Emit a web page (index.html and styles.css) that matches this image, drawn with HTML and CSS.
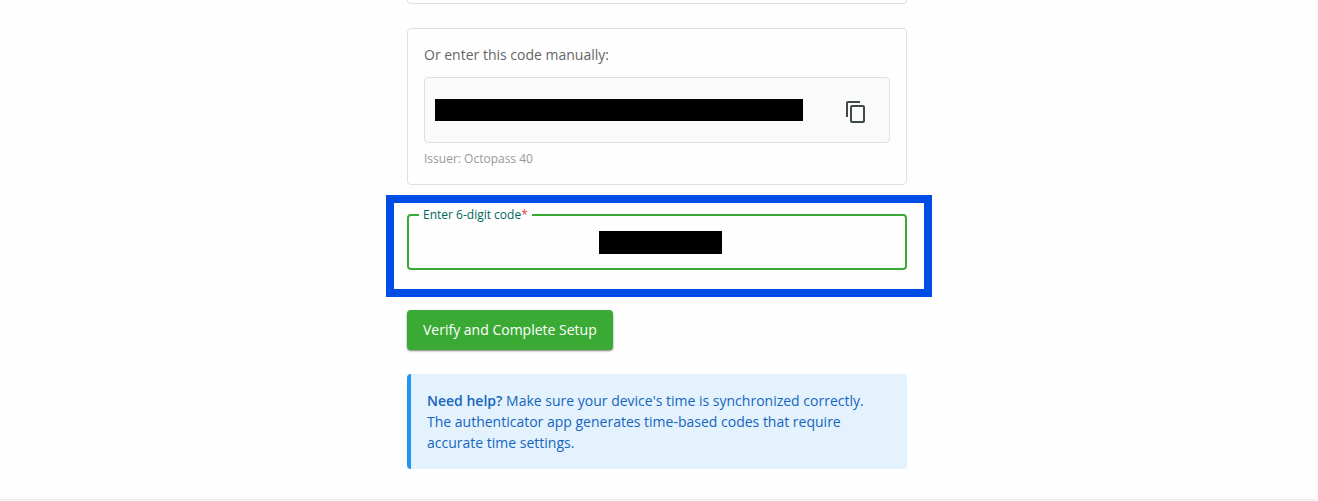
FILE: index.html
```
<!DOCTYPE html>
<html lang="en">
<head>
  <meta charset="UTF-8">
  <title>Authenticator Setup</title>
  <meta name="viewport" content="width=device-width, initial-scale=1.0">
  <link rel="stylesheet" href="styles.css">
</head>
<body>
  <main class="page">
    <div class="setup">
      <div class="card card-qr"></div>

      <section class="card card-manual">
        <p class="manual-label">Or enter this code manually:</p>
        <div class="code-box">
          <div class="redacted redacted-key"></div>
          <button type="button" class="copy-btn" aria-label="Copy code">
            <svg viewBox="0 0 24 24" width="24" height="24" fill="currentColor">
              <path d="M16 1H4c-1.1 0-2 .9-2 2v14h2V3h12V1zm3 4H8c-1.1 0-2 .9-2 2v14c0 1.1.9 2 2 2h11c1.1 0 2-.9 2-2V7c0-1.1-.9-2-2-2zm0 16H8V7h11v14z"/>
            </svg>
          </button>
        </div>
        <p class="issuer">Issuer: Octopass 40</p>
      </section>

      <form class="verify" onsubmit="return false">
        <div class="highlight">
          <fieldset class="field">
            <legend><label for="code">Enter 6-digit code<span class="required">*</span></label></legend>
            <input type="text" id="code" inputmode="numeric" maxlength="6" required>
            <div class="redacted redacted-code"></div>
          </fieldset>
        </div>
        <button type="submit" class="verify-btn">Verify and Complete Setup</button>
      </form>

      <div class="help">
        <strong>Need help?</strong> Make sure your device's time is synchronized correctly. The authenticator app generates time-based codes that require accurate time settings.
      </div>
    </div>
  </main>
</body>
</html>
```

FILE: styles.css
```
* {
  box-sizing: border-box;
}

body {
  margin: 0;
  font-family: "Open Sans", sans-serif;
  font-size: 14px;
  background-color: #fafafa;
}

p {
  margin: 0;
}

.page {
  margin-right: 2px;
  padding: 0 2px 30px 0;
  background-color: #fefefe;
  border-bottom: 1px solid #ebebeb;
}

.setup {
  max-width: 500px;
  margin: 0 auto;
}

.card {
  border: 1px solid #e0e0e0;
  border-radius: 4px;
}

/* only the lower edge of the QR card is in view */
.card-qr {
  height: 4px;
  border-top: none;
  border-radius: 0 0 4px 4px;
}

.card-manual {
  margin-top: 24px;
  padding: 16px;
}

.manual-label {
  line-height: 20px;
  color: #666;
}

.code-box {
  display: flex;
  align-items: center;
  justify-content: space-between;
  margin-top: 12px;
  padding: 8px 9px 8px 10px;
  border: 1px solid #e0e0e0;
  border-radius: 4px;
  background-color: #fafafa;
}

.redacted {
  background-color: #000;
}

.redacted-key {
  width: 368px;
  height: 22px;
}

.copy-btn {
  width: 48px;
  height: 48px;
  padding: 14px 12px 10px;
  border: none;
  background: none;
  color: #3f4945;
  cursor: pointer;
}

.copy-btn svg {
  display: block;
}

.issuer {
  margin-top: 8px;
  padding-bottom: 2px;
  font-size: 12px;
  line-height: 15px;
  color: #999;
}

/* blue frame is wider than the column */
.highlight {
  margin: 10px -25px 0 -21px;
  padding: 3px 17px 19px 13px;
  border: 8px solid #004de6;
}

.field {
  position: relative;
  min-width: 0;
  margin: 0;
  padding: 0 10px;
  border: 2px solid #3aaa35;
  border-radius: 4px;
}

.field legend {
  padding: 0 4px;
  font-size: 12px;
  line-height: 18px;
  color: #00695c;
}

.required {
  color: #e53935;
}

.field input {
  display: block;
  width: 100%;
  height: 44px;
  padding: 0;
  border: none;
  outline: none;
  background: none;
  font: inherit;
  text-align: center;
}

.redacted-code {
  position: absolute;
  bottom: 14px;
  left: 50%;
  width: 123px;
  height: 23px;
  margin-left: -58px;
}

.verify-btn {
  display: block;
  height: 40px;
  margin-top: 13px;
  padding: 0 16px 2px;
  border: none;
  border-radius: 4px;
  background-color: #3aaa35;
  color: #fff;
  font: inherit;
  font-weight: 500;
  box-shadow: 0 1px 2px rgba(0, 0, 0, 0.5);
  cursor: pointer;
}

.help {
  margin-top: 24px;
  padding: 16px;
  border-left: 4px solid #2196f3;
  border-radius: 4px;
  background-color: #e3f2fd;
  color: #1565c0;
  line-height: 21px;
}

.help strong {
  font-weight: 600;
}
```
